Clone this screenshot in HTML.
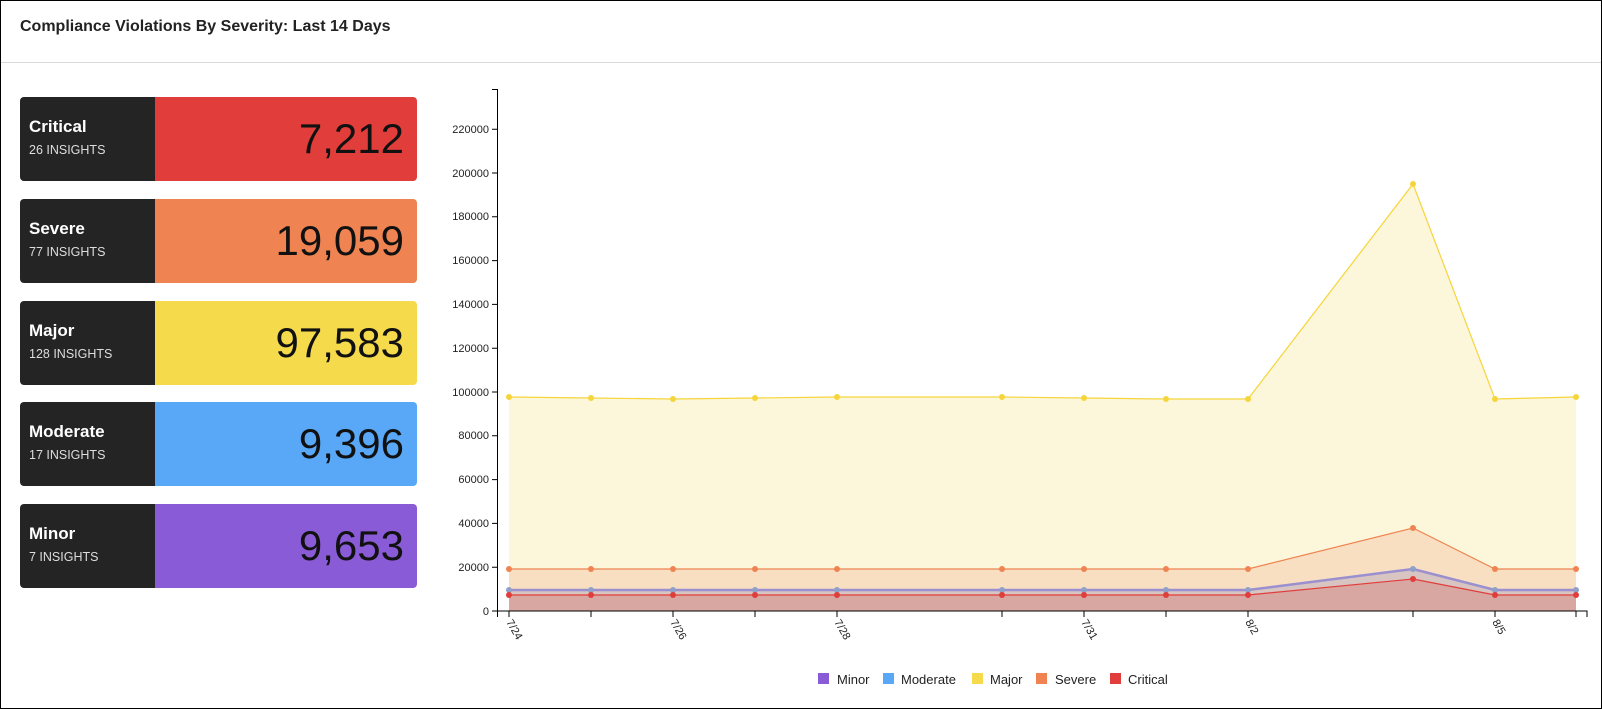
<!DOCTYPE html>
<html><head><meta charset="utf-8"><style>
*{margin:0;padding:0;box-sizing:border-box}
body{width:1602px;height:709px;background:#fff;font-family:"Liberation Sans",sans-serif;position:relative;overflow:hidden}
.frame{position:absolute;left:0;top:0;width:1602px;height:709px;border:1px solid #000}
.hdr{position:absolute;left:0;top:0;width:1602px;height:63px;border-bottom:1px solid #d9d9d9}
.hdr h1{position:absolute;left:20px;top:18px;font-size:16px;font-weight:bold;color:#222}
.card{position:absolute;left:20px;width:397px;height:84px;border-radius:4px;overflow:hidden;display:flex}
.card .l{width:135px;background:#242424;color:#fff;padding:20px 0 0 9px}
.card .l b{display:block;font-size:17px}
.card .l span{display:block;font-size:12.5px;color:#ddd;margin-top:6px}
.card .r{flex:1;text-align:right;padding-right:13px;font-size:42px;color:#111;line-height:84px;font-weight:300}
</style></head><body>
<div class="hdr"><h1>Compliance Violations By Severity: Last 14 Days</h1></div>
<div class="card" style="top:97px"><div class="l"><b>Critical</b><span>26 INSIGHTS</span></div><div class="r" style="background:#e13d3a">7,212</div></div>
<div class="card" style="top:199px"><div class="l"><b>Severe</b><span>77 INSIGHTS</span></div><div class="r" style="background:#ef8452">19,059</div></div>
<div class="card" style="top:301px"><div class="l"><b>Major</b><span>128 INSIGHTS</span></div><div class="r" style="background:#f5da4c">97,583</div></div>
<div class="card" style="top:402px"><div class="l"><b>Moderate</b><span>17 INSIGHTS</span></div><div class="r" style="background:#59a8f8">9,396</div></div>
<div class="card" style="top:504px"><div class="l"><b>Minor</b><span>7 INSIGHTS</span></div><div class="r" style="background:#8a5bd6">9,653</div></div>
<svg style="position:absolute;left:0;top:0" width="1602" height="709" font-family="Liberation Sans, sans-serif">
<polygon fill="#fcf6da" points="509,611 509,397 591,398 673,399 755,398 837,397 1002,397 1084,398 1166,399 1248,399 1413,184 1495,399 1576,397 1576,611"/>
<polyline fill="none" stroke="#f5d53c" stroke-width="1.2" points="509,397 591,398 673,399 755,398 837,397 1002,397 1084,398 1166,399 1248,399 1413,184 1495,399 1576,397"/>
<polygon fill="#f9dfc2" points="509,611 509,569 591,569 673,569 755,569 837,569 1002,569 1084,569 1166,569 1248,569 1413,528 1495,569 1576,569 1576,611"/>
<polyline fill="none" stroke="#ef8452" stroke-width="1.2" points="509,569 591,569 673,569 755,569 837,569 1002,569 1084,569 1166,569 1248,569 1413,528 1495,569 1576,569"/>
<polygon fill="#d8c4c0" points="509,611 509,590 591,590 673,590 755,590 837,590 1002,590 1084,590 1166,590 1248,590 1413,569 1495,590 1576,590 1576,611"/>
<polyline fill="none" stroke="#9a8fcf" stroke-width="2.5" points="509,590 591,590 673,590 755,590 837,590 1002,590 1084,590 1166,590 1248,590 1413,569 1495,590 1576,590"/>
<polygon fill="#d9a7a2" points="509,611 509,595 591,595 673,595 755,595 837,595 1002,595 1084,595 1166,595 1248,595 1413,579 1495,595 1576,595 1576,611"/>
<polyline fill="none" stroke="#e13d3a" stroke-width="1.2" points="509,595 591,595 673,595 755,595 837,595 1002,595 1084,595 1166,595 1248,595 1413,579 1495,595 1576,595"/>
<g id="dots">
<g fill="#f5d53c"><circle cx="509" cy="397" r="3"/><circle cx="591" cy="398" r="3"/><circle cx="673" cy="399" r="3"/><circle cx="755" cy="398" r="3"/><circle cx="837" cy="397" r="3"/><circle cx="1002" cy="397" r="3"/><circle cx="1084" cy="398" r="3"/><circle cx="1166" cy="399" r="3"/><circle cx="1248" cy="399" r="3"/><circle cx="1413" cy="184" r="3"/><circle cx="1495" cy="399" r="3"/><circle cx="1576" cy="397" r="3"/></g>
<g fill="#ef8452"><circle cx="509" cy="569" r="3"/><circle cx="591" cy="569" r="3"/><circle cx="673" cy="569" r="3"/><circle cx="755" cy="569" r="3"/><circle cx="837" cy="569" r="3"/><circle cx="1002" cy="569" r="3"/><circle cx="1084" cy="569" r="3"/><circle cx="1166" cy="569" r="3"/><circle cx="1248" cy="569" r="3"/><circle cx="1413" cy="528" r="3"/><circle cx="1495" cy="569" r="3"/><circle cx="1576" cy="569" r="3"/></g>
<g fill="#8fa0c8"><circle cx="509" cy="590" r="3"/><circle cx="591" cy="590" r="3"/><circle cx="673" cy="590" r="3"/><circle cx="755" cy="590" r="3"/><circle cx="837" cy="590" r="3"/><circle cx="1002" cy="590" r="3"/><circle cx="1084" cy="590" r="3"/><circle cx="1166" cy="590" r="3"/><circle cx="1248" cy="590" r="3"/><circle cx="1413" cy="569" r="3"/><circle cx="1495" cy="590" r="3"/><circle cx="1576" cy="590" r="3"/></g>
<g fill="#e13d3a"><circle cx="509" cy="595" r="3"/><circle cx="591" cy="595" r="3"/><circle cx="673" cy="595" r="3"/><circle cx="755" cy="595" r="3"/><circle cx="837" cy="595" r="3"/><circle cx="1002" cy="595" r="3"/><circle cx="1084" cy="595" r="3"/><circle cx="1166" cy="595" r="3"/><circle cx="1248" cy="595" r="3"/><circle cx="1413" cy="579" r="3"/><circle cx="1495" cy="595" r="3"/><circle cx="1576" cy="595" r="3"/></g>
</g>
<g stroke="#000" fill="none" stroke-width="1">
<path d="M492,89.5H497.5V611M492,611H1587V617M497.5,611V617"/>
<path d="M509,611v6M591,611v6M673,611v6M755,611v6M837,611v6M1002,611v6M1084,611v6M1166,611v6M1248,611v6M1413,611v6M1495,611v6M1576,611v6"/>
<path d="M492,567.2h5M492,523.4h5M492,479.6h5M492,435.8h5M492,392h5M492,348.2h5M492,304.4h5M492,260.6h5M492,216.8h5M492,173h5M492,129.2h5"/>
</g>
<g font-size="11" fill="#222" text-anchor="end">
<text x="489" y="615">0</text><text x="489" y="571">20000</text><text x="489" y="527">40000</text><text x="489" y="483">60000</text><text x="489" y="439">80000</text><text x="489" y="396">100000</text><text x="489" y="352">120000</text><text x="489" y="308">140000</text><text x="489" y="264">160000</text><text x="489" y="220">180000</text><text x="489" y="177">200000</text><text x="489" y="133">220000</text>
</g>
<g font-size="11" fill="#222">
<text transform="translate(506,622) rotate(60)">7/24</text>
<text transform="translate(670,622) rotate(60)">7/26</text>
<text transform="translate(834,622) rotate(60)">7/28</text>
<text transform="translate(1081,622) rotate(60)">7/31</text>
<text transform="translate(1245,622) rotate(60)">8/2</text>
<text transform="translate(1492,622) rotate(60)">8/5</text>
</g>
<g font-size="13" fill="#222">
<rect x="818" y="673" width="11" height="11" fill="#8a5bd6"/><text x="837" y="684">Minor</text>
<rect x="883" y="673" width="11" height="11" fill="#59a8f8"/><text x="901" y="684">Moderate</text>
<rect x="972" y="673" width="11" height="11" fill="#f5da4c"/><text x="990" y="684">Major</text>
<rect x="1036" y="673" width="11" height="11" fill="#ef8452"/><text x="1055" y="684">Severe</text>
<rect x="1110" y="673" width="11" height="11" fill="#e13d3a"/><text x="1128" y="684">Critical</text>
</g>
</svg>
<div class="frame"></div>
</body></html>
